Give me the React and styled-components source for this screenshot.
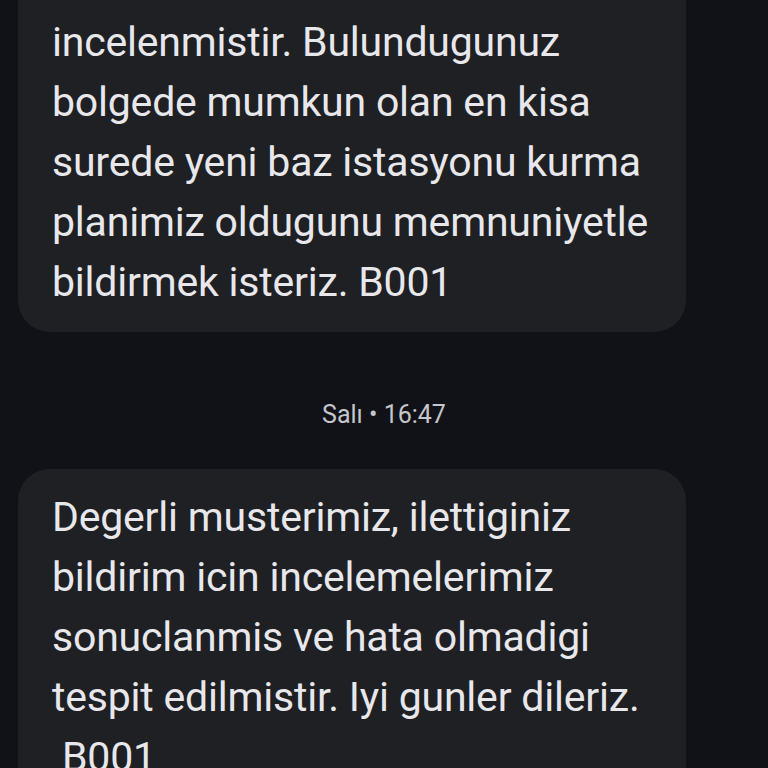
import React from "react";
import styled, { createGlobalStyle } from "styled-components";

const Global = createGlobalStyle`
  html, body {
    margin: 0;
    padding: 0;
    background: #111217;
    overflow: hidden;
  }
  body {
    font-family: Roboto, "Noto Sans", sans-serif;
  }
`;

const Feed = styled.div`
  width: 768px;
  height: 768px;
  display: flex;
  flex-direction: column;
  overflow: hidden;
`;

const Bubble = styled.div`
  width: 668px;
  box-sizing: border-box;
  margin-left: 18px;
  padding: ${(p) => (p.$cut ? "12px 34px 20px" : "18px 34px 20px")};
  background: #1f2024;
  border-radius: ${(p) => (p.$cut ? "0 0 32px 32px" : "32px")};
  color: #e8e8ec;
  font-size: 41px;
  line-height: 60px;
  letter-spacing: -0.2px;
  white-space: nowrap;
  flex-shrink: 0;
`;

const Stamp = styled.div`
  margin: 69px 0 40px;
  text-align: center;
  color: #c4c6cc;
  font-size: 25px;
  line-height: 28px;
`;

function App() {
  return (
    <>
      <Global />
      <Feed>
        <Bubble $cut>
          incelenmistir. Bulundugunuz
          <br />
          bolgede mumkun olan en kisa
          <br />
          surede yeni baz istasyonu kurma
          <br />
          planimiz oldugunu memnuniyetle
          <br />
          bildirmek isteriz. B001
        </Bubble>
        <Stamp>Salı • 16:47</Stamp>
        <Bubble>
          Degerli musterimiz, ilettiginiz
          <br />
          bildirim icin incelemelerimiz
          <br />
          sonuclanmis ve hata olmadigi
          <br />
          tespit edilmistir. Iyi gunler dileriz.
          <br />
          {"\u00a0"}B001
        </Bubble>
      </Feed>
    </>
  );
}

export default App;
